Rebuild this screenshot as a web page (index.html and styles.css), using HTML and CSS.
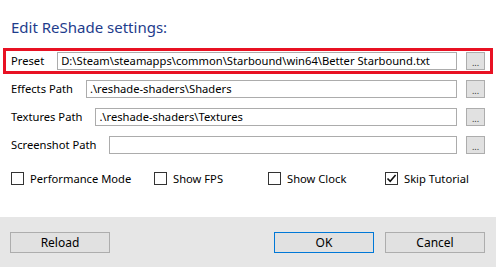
FILE: index.html
```html
<!DOCTYPE html>
<html lang="en">
<head>
    <meta charset="UTF-8">
    <title>Edit ReShade settings</title>
    <link rel="stylesheet" href="styles.css">
</head>
<body>
    <div class="dialog">
        <div class="content">
            <h1 class="title">Edit ReShade settings:</h1>

            <div class="row row-highlight">
                <label class="row-label">Preset</label>
                <div class="field">D:\Steam\steamapps\common\Starbound\win64\Better Starbound.txt</div>
                <button class="browse">...</button>
            </div>
            <div class="row">
                <label class="row-label">Effects Path</label>
                <div class="field">.\reshade-shaders\Shaders</div>
                <button class="browse">...</button>
            </div>
            <div class="row">
                <label class="row-label">Textures Path</label>
                <div class="field">.\reshade-shaders\Textures</div>
                <button class="browse">...</button>
            </div>
            <div class="row">
                <label class="row-label">Screenshot Path</label>
                <div class="field"></div>
                <button class="browse">...</button>
            </div>

            <div class="options">
                <div class="option"><span class="check"></span><span class="option-text">Performance Mode</span></div>
                <div class="option"><span class="check"></span><span class="option-text">Show FPS</span></div>
                <div class="option"><span class="check"></span><span class="option-text">Show Clock</span></div>
                <div class="option">
                    <span class="check">
                        <svg width="11" height="11" viewBox="0 0 11 11"><path d="M1.5 5.5 L4.2 8.3 L9.6 2" fill="none" stroke="#111" stroke-width="1.6"/></svg>
                    </span>
                    <span class="option-text">Skip Tutorial</span>
                </div>
            </div>
        </div>

        <div class="footer">
            <button class="btn">Reload</button>
            <button class="btn btn-default">OK</button>
            <button class="btn">Cancel</button>
        </div>
    </div>
</body>
</html>
```

FILE: styles.css
```css
/* dialog */
body {
    margin: 0;
    padding: 0;
    background-color: #fff;
    font-family: "Noto Sans", "Open Sans", sans-serif;
    font-size: 11.2px;
    color: #000;
}

.dialog {
    width: 496px;
    height: 267px;
    display: flex;
    flex-direction: column;
}

.content {
    height: 217px;
    box-sizing: border-box;
    padding: 17px 11px 0 11px;
}

.title {
    margin: 0 0 11px 0;
    font-size: 15px;
    font-weight: normal;
    line-height: 20px;
    color: #1e3c8c;
}

.row {
    display: flex;
    align-items: center;
    gap: 13px;
    height: 18px;
    margin-bottom: 10px;
}

.row-highlight {
    height: 18px;
    margin: 0 -8px 6px -8px;
    padding: 1px 5px;
    border: 3px solid #e81123;
}

.row-label {
    white-space: nowrap;
    line-height: 18px;
}

.field {
    flex: 1;
    height: 18px;
    box-sizing: border-box;
    border: 1px solid #acacac;
    padding: 0 3px;
    line-height: 16px;
    white-space: nowrap;
    overflow: hidden;
    margin-right: -3px;
}

.browse {
    width: 19px;
    height: 18px;
    box-sizing: border-box;
    margin-left: -1px;
    padding: 4px 0 0 0;
    border: 1px solid #adadad;
    background-color: #e1e1e1;
    font-family: inherit;
    font-size: 9px;
    line-height: 10px;
    color: #333;
}

.options {
    display: grid;
    grid-template-columns: 143px 114px 117px auto;
    margin-top: 16px;
    height: 17px;
    align-items: center;
}

.option {
    display: flex;
    align-items: center;
    gap: 6px;
    white-space: nowrap;
}

.check {
    flex: none;
    width: 13px;
    height: 13px;
    box-sizing: border-box;
    border: 1px solid #333;
    background-color: #fff;
    display: flex;
    align-items: center;
    justify-content: center;
}

.check svg {
    display: block;
}

.footer {
    flex: 1;
    background-color: #e6e6e6;
    display: flex;
    align-items: flex-start;
    padding: 15px 11px 0 10px;
    gap: 11px;
}

.btn {
    width: 100px;
    height: 21px;
    box-sizing: border-box;
    border: 1px solid #adadad;
    background-color: #e1e1e1;
    font-family: inherit;
    font-size: 12px;
    color: #000;
    padding: 0;
}

.btn-default {
    margin-left: auto;
    border-color: #0078d7;
}
```
